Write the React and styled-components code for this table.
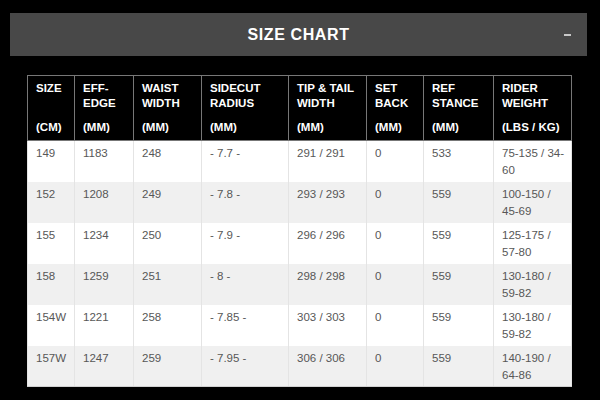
import React from 'react';
import styled, { createGlobalStyle } from 'styled-components';

const GlobalStyle = createGlobalStyle`
  html, body {
    margin: 0;
    padding: 0;
    background: #000;
  }
  body {
    font-family: "Liberation Sans", Arial, sans-serif;
  }
`;

const Page = styled.div`
  width: 600px;
  height: 400px;
  box-sizing: border-box;
  padding: 13px 13px 0 10px;
  background: #000;
  overflow: hidden;
`;

const Bar = styled.div`
  height: 43px;
  background: #484848;
  display: grid;
  grid-template-columns: 1fr auto 1fr;
  align-items: center;
  padding: 0 16px;
`;

const Title = styled.h2`
  grid-column: 2;
  margin: 0;
  color: #fff;
  font-size: 16px;
  font-weight: 700;
  letter-spacing: 0.6px;
  line-height: 1;
  padding-top: 1px;
`;

const Minus = styled.span`
  grid-column: 3;
  justify-self: end;
  width: 7px;
  height: 2px;
  background: #c8c8c8;
`;

const Content = styled.div`
  padding: 19px 16px 0 17px;
`;

const Table = styled.table`
  width: 544px;
  table-layout: fixed;
  border-collapse: collapse;
  font-size: 11.5px;
`;

const HeadCell = styled.th`
  background: #000;
  color: #fff;
  border: 1px solid #777;
  text-align: left;
  vertical-align: top;
  font-weight: 700;
  font-size: 11.5px;
  padding: 5px 8px 5px;
  height: 64px;
  box-sizing: border-box;
  line-height: 15px;
  white-space: nowrap;
`;

const Unit = styled.div`
  margin-top: 9px;
`;

const Row = styled.tr`
  background: ${p => (p.$alt ? '#f0f0f0' : '#fff')};
`;

const Cell = styled.td`
  color: #575757;
  vertical-align: top;
  padding: 4px 8px 0;
  height: 41px;
  box-sizing: border-box;
  line-height: 17px;
  border-left: 1px solid #e4e4e4;
  border-right: 1px solid #e4e4e4;
  border-bottom: ${p => (p.$last ? '1px solid #d0d0d0' : 'none')};
`;

const Line = styled.span`
  display: block;
  white-space: nowrap;
`;

const widths = [47, 59, 68, 87, 78, 57, 70, 78];

const heads = [
  [['SIZE'], '(CM)'],
  [['EFF-', 'EDGE'], '(MM)'],
  [['WAIST', 'WIDTH'], '(MM)'],
  [['SIDECUT', 'RADIUS'], '(MM)'],
  [['TIP & TAIL', 'WIDTH'], '(MM)'],
  [['SET', 'BACK'], '(MM)'],
  [['REF', 'STANCE'], '(MM)'],
  [['RIDER', 'WEIGHT'], '(LBS / KG)'],
];

const rows = [
  ['149', '1183', '248', '- 7.7 -', '291 / 291', '0', '533', ['75-135 / 34-', '60']],
  ['152', '1208', '249', '- 7.8 -', '293 / 293', '0', '559', ['100-150 /', '45-69']],
  ['155', '1234', '250', '- 7.9 -', '296 / 296', '0', '559', ['125-175 /', '57-80']],
  ['158', '1259', '251', '- 8 -', '298 / 298', '0', '559', ['130-180 /', '59-82']],
  ['154W', '1221', '258', '- 7.85 -', '303 / 303', '0', '559', ['130-180 /', '59-82']],
  ['157W', '1247', '259', '- 7.95 -', '306 / 306', '0', '559', ['140-190 /', '64-86']],
];

const SizeTable = () => (
  <Table>
    <colgroup>
      {widths.map((w, i) => <col key={i} style={{ width: w }} />)}
    </colgroup>
    <thead>
      <tr>
        {heads.map(([label, unit], i) => (
          <HeadCell key={i}>
            {label.map(l => <Line key={l}>{l}</Line>)}
            {label.length === 1 && <Line>&nbsp;</Line>}
            <Unit>{unit}</Unit>
          </HeadCell>
        ))}
      </tr>
    </thead>
    <tbody>
      {rows.map((row, r) => (
        <Row key={r} $alt={r % 2 === 1}>
          {row.map((v, c) => (
            <Cell key={c} $last={r === rows.length - 1}>
              {Array.isArray(v) ? v.map(l => <Line key={l}>{l}</Line>) : v}
            </Cell>
          ))}
        </Row>
      ))}
    </tbody>
  </Table>
);

const App = () => (
  <Page>
    <GlobalStyle />
    <Bar>
      <Title>SIZE CHART</Title>
      <Minus />
    </Bar>
    <Content>
      <SizeTable />
    </Content>
  </Page>
);

export default App;
